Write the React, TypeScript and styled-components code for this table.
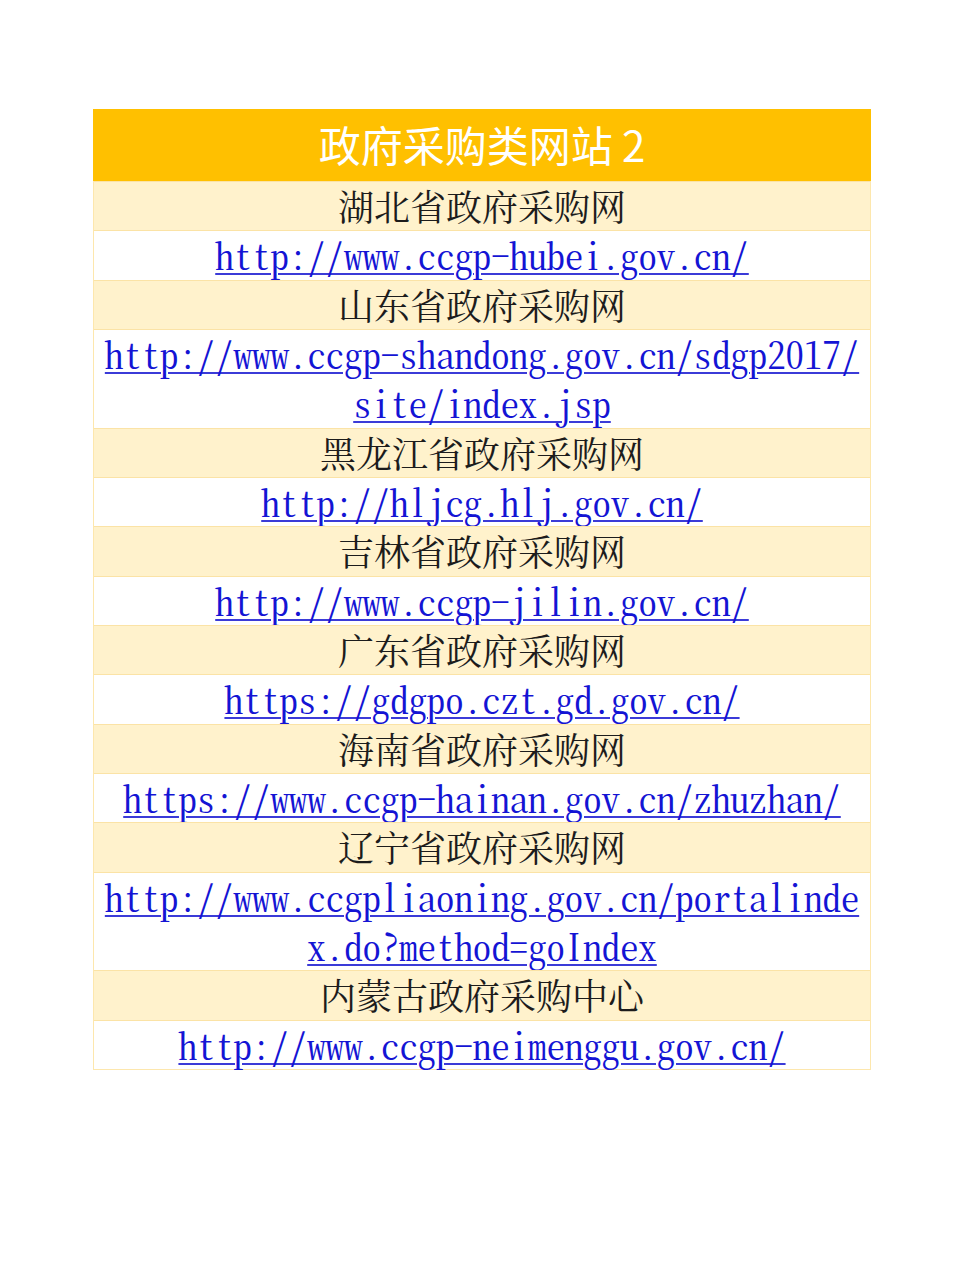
import styled, { createGlobalStyle } from "styled-components";

const GlobalStyle = createGlobalStyle`
  html, body {
    margin: 0;
    padding: 0;
    background: #ffffff;
  }
`;

interface SiteEntry {
  name: string;
  url: string[];
}

const sites: SiteEntry[] = [
  { name: "湖北省政府采购网", url: ["http://www.ccgp-hubei.gov.cn/"] },
  { name: "山东省政府采购网", url: ["http://www.ccgp-shandong.gov.cn/sdgp2017/", "site/index.jsp"] },
  { name: "黑龙江省政府采购网", url: ["http://hljcg.hlj.gov.cn/"] },
  { name: "吉林省政府采购网", url: ["http://www.ccgp-jilin.gov.cn/"] },
  { name: "广东省政府采购网", url: ["https://gdgpo.czt.gd.gov.cn/"] },
  { name: "海南省政府采购网", url: ["https://www.ccgp-hainan.gov.cn/zhuzhan/"] },
  { name: "辽宁省政府采购网", url: ["http://www.ccgpliaoning.gov.cn/portalinde", "x.do?method=goIndex"] },
  { name: "内蒙古政府采购中心", url: ["http://www.ccgp-neimenggu.gov.cn/"] },
];

const Page = styled.div`
  padding: 109px 0 200px 93px;
`;

const Sheet = styled.div`
  width: 778px;
  box-sizing: border-box;
  border: 1px solid #fde7ad;
  border-top: none;
  display: flex;
  flex-direction: column;
`;

const Header = styled.div`
  height: 72px;
  margin: 0 -1px;
  background: #ffc000;
  color: #ffffff;
  display: flex;
  align-items: center;
  justify-content: center;
  font-family: "Noto Sans CJK SC", "Noto Sans", sans-serif;
  font-size: 42px;
  line-height: 1;
  padding-bottom: 2px;
  box-sizing: border-box;
`;

const NameRow = styled.div`
  background: #fff2cc;
  box-shadow: inset 0 1px 0 #fbe3a6;
  text-align: center;
  font-family: "Noto Serif CJK SC", "Noto Sans CJK SC", serif;
  font-size: 36px;
  line-height: 49.33px;
  height: 49.33px;
  color: #1c1c1c;
`;

const LinkRow = styled.div`
  background: #ffffff;
  box-shadow: inset 0 1px 0 #fbe3a6;
  text-align: center;
`;

const LinkLine = styled.div`
  font-family: "Noto Serif CJK SC", "Liberation Mono", monospace;
  font-feature-settings: "hwid" 1;
  font-size: 36.8px;
  line-height: 49.33px;
  height: 49.33px;
  color: #1414d4;
`;

const Link = styled.a`
  color: inherit;
  text-decoration: underline;
  text-decoration-thickness: 2px;
  text-underline-offset: 3px;
  text-decoration-color: #3b3bd8;
`;

export default function App() {
  return (
    <Page>
      <GlobalStyle />
      <Sheet>
        <Header>政府采购类网站 2</Header>
        {sites.map((site) => (
          <div key={site.name}>
            <NameRow>{site.name}</NameRow>
            <LinkRow>
              {site.url.map((line) => (
                <LinkLine key={line}>
                  <Link href="#">{line}</Link>
                </LinkLine>
              ))}
            </LinkRow>
          </div>
        ))}
      </Sheet>
    </Page>
  );
}
